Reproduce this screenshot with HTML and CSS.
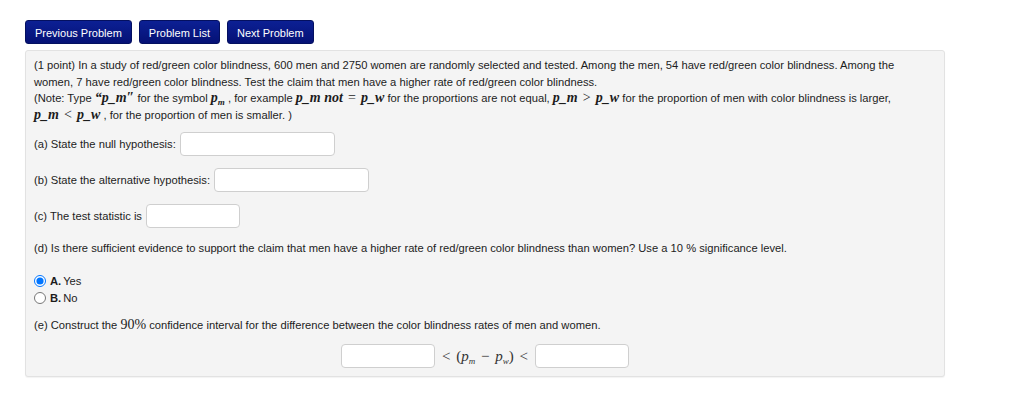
FILE: index.html
```html
<!DOCTYPE html>
<html lang="en">
<head>
    <meta charset="UTF-8">
    <title>Problem</title>
    <link rel="stylesheet" href="styles.css">
</head>
<body>
    <div class="page">
        <!-- 상단 네비 버튼 -->
        <nav class="nav">
            <a href="#" class="nav-btn">Previous Problem</a>
            <a href="#" class="nav-btn">Problem List</a>
            <a href="#" class="nav-btn">Next Problem</a>
        </nav>

        <div class="problem">
            <div class="intro">
                (1 point) In a study of red/green color blindness, 600 men and 2750 women are randomly selected and tested. Among the men, 54 have red/green color blindness. Among the women, 7 have red/green color blindness. Test the claim that men have a higher rate of red/green color blindness.<br>
                (Note: Type <span class="math">&ldquo;p_m&Prime;</span> for the symbol <span class="math">p<sub>m</sub></span> , for example <span class="math">p_m not</span> <span class="op">=</span> <span class="math">p_w</span> for the proportions are not equal, <span class="math">p_m</span> <span class="op">&gt;</span> <span class="math">p_w</span> for the proportion of men with color blindness is larger,<br>
                <span class="math">p_m</span> <span class="op">&lt;</span> <span class="math">p_w</span> , for the proportion of men is smaller. )
            </div>

            <div class="row">(a) State the null hypothesis: <input type="text" class="answer w155"></div>
            <div class="row">(b) State the alternative hypothesis: <input type="text" class="answer w155"></div>
            <div class="row">(c) The test statistic is <input type="text" class="answer w94"></div>

            <div class="row text">(d) Is there sufficient evidence to support the claim that men have a higher rate of red/green color blindness than women? Use a 10 % significance level.</div>

            <div class="choices">
                <label class="choice"><input type="radio" name="d" checked> <b>A.</b> Yes</label>
                <label class="choice"><input type="radio" name="d"> <b>B.</b> No</label>
            </div>

            <div class="row text">(e) Construct the <span class="num">90%</span> confidence interval for the difference between the color blindness rates of men and women.</div>

            <div class="interval">
                <input type="text" class="answer w94">
                <span class="expr">&lt; (<i>p<sub>m</sub></i> &minus; <i>p<sub>w</sub></i>) &lt;</span>
                <input type="text" class="answer w94">
            </div>
        </div>
    </div>
</body>
</html>
```

FILE: styles.css
```css
* {
    margin: 0;
    padding: 0;
    box-sizing: border-box;
}

body {
    font-family: 'Liberation Sans', Arial, sans-serif;
    font-size: 11.2px;
    color: #1c1c1c;
    background-color: #fff;
}

.page {
    padding: 20px 25px;
    width: 970px;
}

.nav {
    display: flex;
    gap: 7px;
    margin-bottom: 6px;
}

.nav-btn {
    display: block;
    height: 24px;
    line-height: 24px;
    padding: 0 9px;
    color: #fff;
    text-decoration: none;
    font-size: 11px;
    background: linear-gradient(#0c2094, #051175);
    border: 1px solid #041060;
    border-radius: 3px;
}

.problem {
    background-color: #f4f4f4;
    border: 1px solid #e2e2e2;
    border-radius: 3px;
    box-shadow: 0 1px 1px rgba(0, 0, 0, 0.05);
    padding: 6px 8px 8px 8px;
}

.intro {
    line-height: 16.5px;
}

.math {
    font-family: 'Liberation Serif', 'Times New Roman', serif;
    font-style: italic;
    font-weight: bold;
    font-size: 14px;
    line-height: 1;
}

.math sub, .expr sub {
    font-size: 9px;
    line-height: 0;
    vertical-align: -3px;
}

.op {
    font-family: 'Liberation Serif', 'Times New Roman', serif;
    font-size: 14px;
    line-height: 1;
    margin: 0 2px;
}

.row {
    display: flex;
    align-items: center;
    gap: 4px;
    margin-top: 12px;
}

.intro + .row {
    margin-top: 9px;
}

.row.text {
    display: block;
    margin-top: 12px;
    line-height: 16px;
}

.answer {
    height: 24px;
    background-color: #fff;
    border: 1px solid #cfcfcf;
    border-radius: 4px;
}

.w155 {
    width: 155px;
}

.w94 {
    width: 94px;
}

.choices {
    margin-top: 18px;
    display: flex;
    flex-direction: column;
    gap: 3px;
}

.choice {
    display: flex;
    align-items: center;
    gap: 2px;
    height: 14px;
}

.choice input {
    width: 12px;
    height: 12px;
    margin: 0 2px 0 0;
}

.num {
    font-family: 'Liberation Serif', 'Times New Roman', serif;
    font-size: 14px;
    line-height: 1;
}

.interval {
    display: flex;
    justify-content: center;
    align-items: center;
    gap: 7px;
    margin-top: 11px;
}

.expr {
    font-family: 'Liberation Serif', 'Times New Roman', serif;
    font-size: 15px;
    color: #333;
    word-spacing: 2px;
}
```
